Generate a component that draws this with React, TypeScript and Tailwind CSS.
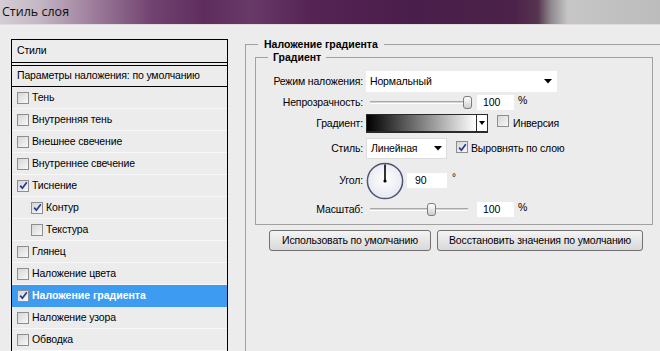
import React from "react";

function Check({ checked }: { checked?: boolean }) {
  return (
    <span className="inline-flex w-[12px] h-[12px] shrink-0 items-center justify-center border border-[#8e8e8e] bg-[linear-gradient(135deg,#d6d6d6,#f8f8f8)]">
      {checked && (
        <svg width="9" height="9" viewBox="0 0 9 9">
          <path d="M1.2 4.6 L3.4 7.2 L7.8 1.2" stroke="#26388c" strokeWidth="1.7" fill="none" />
        </svg>
      )}
    </span>
  );
}

function Arrow() {
  return (
    <svg width="8" height="5" viewBox="0 0 8 5">
      <path d="M0 0 H8 L4 4.5 Z" fill="#000" />
    </svg>
  );
}

function Slider({ thumb }: { thumb: number }) {
  return (
    <div className="relative w-[106px] h-[15px]">
      <div className="absolute left-[4px] top-[6px] w-[98px] h-[3px] border-t border-[#a8a8a8] border-b border-b-[#ffffff] bg-[#d4d4d4]" />
      <div
        className="absolute top-[1px] w-[9px] h-[13px] rounded-[3px] border border-[#7c7c7c] bg-[linear-gradient(180deg,#ffffff,#cfcfcf)]"
        style={{ left: thumb }}
      />
    </div>
  );
}

const items: { label: string; checked?: boolean; indent?: boolean; selected?: boolean }[] = [
  { label: "Тень" },
  { label: "Внутренняя тень" },
  { label: "Внешнее свечение" },
  { label: "Внутреннее свечение" },
  { label: "Тиснение", checked: true },
  { label: "Контур", checked: true, indent: true },
  { label: "Текстура", indent: true },
  { label: "Глянец" },
  { label: "Наложение цвета" },
  { label: "Наложение градиента", checked: true, selected: true },
  { label: "Наложение узора" },
  { label: "Обводка" },
];

export default function App() {
  return (
    <div className="w-[660px] h-[351px] overflow-hidden bg-[#ececec] text-[10.5px] tracking-[-0.15px] text-black font-['Liberation_Sans',Arial,sans-serif]">
      <div className="h-[25px] border-b border-[#e2dae2] bg-[linear-gradient(90deg,#d4ced4_0%,#c4b6c4_6%,#9e7e9c_14%,#714370_23%,#5e2d5e_31%,#683a68_38%,#552455_47%,#4a1e4b_62%,#4b2249_78%,#56354f_81.5%,#908a8e_83.5%,#c6c6c6_86%,#bcbcbc_100%)]">
        <div className="pl-[2px] pt-[4px] text-[12.5px] tracking-normal leading-[16px] text-[#101010] font-['Open_Sans',sans-serif]">Стиль слоя</div>
      </div>

      <div className="flex pt-[14px] pl-[11px]">
        {/* Left panel */}
        <div className="w-[217px] shrink-0 h-[330px] border border-black">
          <div className="h-[23px] border-b border-black pl-[5px] flex items-center">Стили</div>
          <div className="mt-[2px] border-t border-black h-[22px] border-b pl-[5px] flex items-center">
            Параметры наложения: по умолчанию
          </div>
          {items.map((it) => (
            <div
              key={it.label}
              className={
                "h-[22px] border-b flex items-center " +
                (it.selected
                  ? "bg-[#3d9bf2] border-[#3d9bf2] text-white font-bold tracking-normal"
                  : "border-[#f8f8f8]") +
                (it.indent ? " pl-[19px]" : " pl-[5px]")
              }
            >
              <Check checked={it.checked} />
              <span className="ml-[3px]">{it.label}</span>
            </div>
          ))}
        </div>

        {/* Right section */}
        <div className="ml-[17px] -mt-[1px] shrink-0">
          <fieldset className="w-[440px] border-t border-l border-[#a0a0a0] pl-[9px]">
            <legend className="ml-[3px] px-[6px] font-bold tracking-normal leading-[12px]">Наложение градиента</legend>
            <fieldset className="mt-[1px] w-[398px] border border-[#a0a0a0] pb-[7px]">
              <legend className="ml-[12px] px-[5px] font-bold tracking-normal leading-[12px]">Градиент</legend>

              <div className="pt-[8px] flex flex-col">
                {/* Row 1 */}
                <div className="flex items-center h-[21px]">
                  <div className="w-[107px] text-right">Режим наложения:</div>
                  <div className="ml-[3px] w-[191px] h-[21px] bg-white flex items-center justify-between pl-[4px] pr-[5px]">
                    <span>Нормальный</span>
                    <Arrow />
                  </div>
                </div>
                {/* Row 2 */}
                <div className="mt-[3px] flex items-center h-[15px]">
                  <div className="w-[107px] text-right">Непрозрачность:</div>
                  <div className="ml-[3px]">
                    <Slider thumb={97} />
                  </div>
                  <div className="ml-[5px] w-[37px] h-[15px] bg-white pl-[6px] leading-[15px]">100</div>
                  <div className="ml-[4px] self-start -mt-[2px]">%</div>
                </div>
                {/* Row 3 */}
                <div className="mt-[4px] flex items-center h-[19px]">
                  <div className="w-[107px] text-right">Градиент:</div>
                  <div className="ml-[3px] w-[122px] h-[19px] border border-[#2a2a2a] border-b-2 flex">
                    <div className="flex-1 bg-[linear-gradient(90deg,#000000,#ffffff)]" />
                    <div className="w-[11px] border-l border-[#2a2a2a] bg-white flex items-center justify-center">
                      <svg width="6" height="4" viewBox="0 0 6 4">
                        <path d="M0 0 H6 L3 4 Z" fill="#000" />
                      </svg>
                    </div>
                  </div>
                  <div className="ml-[9px]">
                    <Check />
                  </div>
                  <span className="ml-[4px]">Инверсия</span>
                </div>
                {/* Row 4 */}
                <div className="mt-[5px] flex items-center h-[21px]">
                  <div className="w-[107px] text-right">Стиль:</div>
                  <div className="ml-[3px] w-[81px] h-[21px] bg-white border border-[#dcdcdc] flex items-center justify-between pl-[4px] pr-[4px]">
                    <span>Линейная</span>
                    <Arrow />
                  </div>
                  <div className="ml-[9px]">
                    <Check checked />
                  </div>
                  <span className="ml-[3px]">Выровнять по слою</span>
                </div>
                {/* Row 5 */}
                <div className="mt-[3px] flex items-center h-[37px]">
                  <div className="w-[107px] text-right">Угол:</div>
                  <div className="ml-[3px]">
                    <svg width="38" height="38" viewBox="0 0 38 38">
                      <defs>
                        <radialGradient id="dial" cx="50%" cy="45%" r="60%">
                          <stop offset="0%" stopColor="#ffffff" />
                          <stop offset="100%" stopColor="#e4e6ee" />
                        </radialGradient>
                      </defs>
                      <circle cx="19" cy="19" r="17.6" fill="url(#dial)" stroke="#4d5475" strokeWidth="1.5" />
                      <line x1="19" y1="19" x2="19" y2="2.5" stroke="#000" strokeWidth="1.6" />
                      <circle cx="19" cy="19" r="1.6" fill="#000" />
                    </svg>
                  </div>
                  <div className="ml-[3px] w-[40px] h-[15px] bg-white pl-[8px] leading-[15px]">90</div>
                  <div className="ml-[5px] self-start mt-[8px] text-[10px]">°</div>
                </div>
                {/* Row 6 */}
                <div className="mt-[3px] flex items-center h-[15px]">
                  <div className="w-[107px] text-right">Масштаб:</div>
                  <div className="ml-[3px]">
                    <Slider thumb={61} />
                  </div>
                  <div className="ml-[5px] w-[37px] h-[15px] bg-white pl-[6px] leading-[15px]">100</div>
                  <div className="ml-[4px] self-start -mt-[2px]">%</div>
                </div>
              </div>
            </fieldset>

            <div className="mt-[5px] ml-[14px] flex gap-[6px] pb-[120px]">
              <div className="w-[162px] h-[21px] rounded-[3px] border border-[#707070] bg-[linear-gradient(180deg,#f4f4f4,#e6e6e6_50%,#d8d8d8)] flex items-center justify-center">
                Использовать по умолчанию
              </div>
              <div className="w-[206px] h-[21px] rounded-[3px] border border-[#707070] bg-[linear-gradient(180deg,#f4f4f4,#e6e6e6_50%,#d8d8d8)] flex items-center justify-center">
                Восстановить значения по умолчанию
              </div>
            </div>
          </fieldset>
        </div>
      </div>
    </div>
  );
}
